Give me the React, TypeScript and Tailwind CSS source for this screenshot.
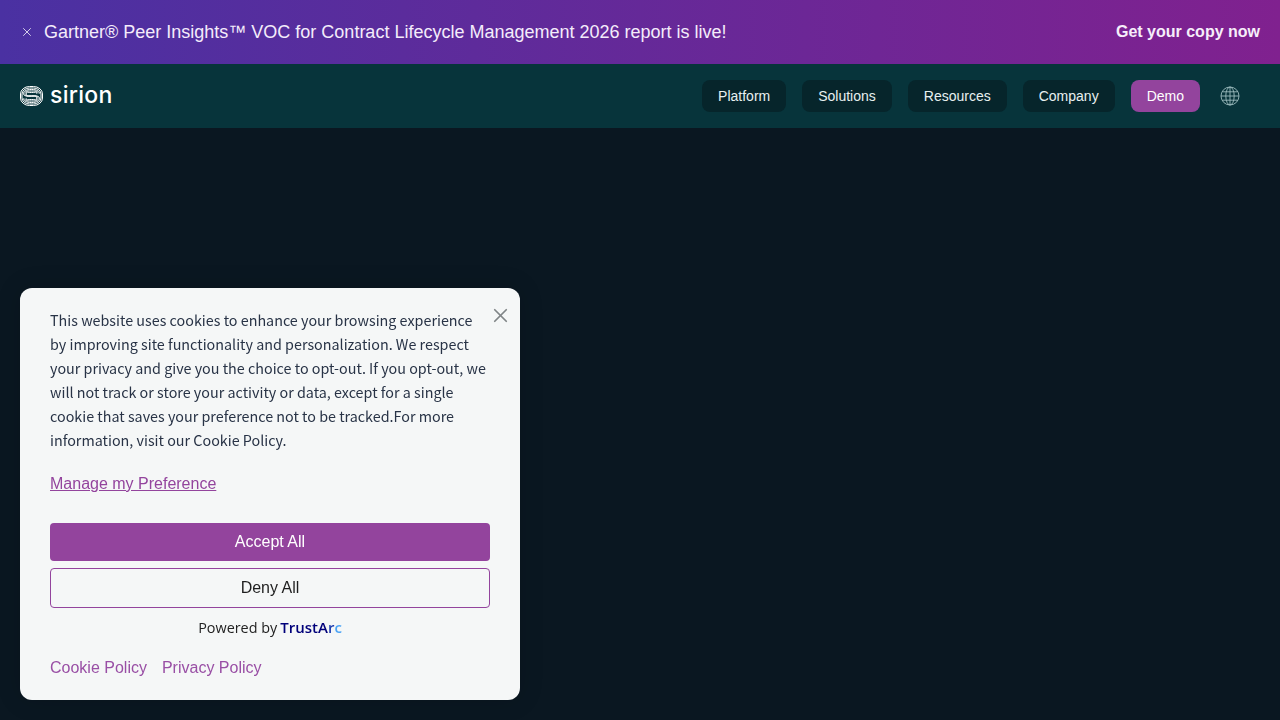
import React from 'react';
import { X } from 'lucide-react';

const navItems = ['Platform', 'Solutions', 'Resources', 'Company'];

// one lobe of the logo, the other one is the same rotated 180deg
function lobePath(d: number) {
  const l = 3.500 + d;
  const r = 19.500 - d;
  const t = 3.500 + d;
  return `M${r} 7.500C${r} 5 17 ${t} 11.500 ${t}C6 ${t} ${l} 5 ${l} 7.500C${l} 10.500 7 10 11.500 10`;
}

function SirionMark() {
  const insets = [0, 1.500, 3];
  return (
    <svg width="23" height="20" viewBox="0 0 23 20" fill="none" stroke="#ffffff" strokeWidth="1">
      <rect x="0.500" y="0.500" width="22" height="19" rx="9" ry="7.500" />
      <rect x="2" y="2" width="19" height="16" rx="7.500" ry="6" />
      {insets.map(d => (
        <path key={d} d={lobePath(d)} />
      ))}
      <g transform="rotate(180 11.500 10)">
        {insets.map(d => (
          <path key={d} d={lobePath(d)} />
        ))}
      </g>
    </svg>
  );
}

function GlobeIcon() {
  return (
    <svg width="20" height="20" viewBox="0 0 20 20" fill="none" stroke="#9dbcbe" strokeWidth="0.9">
      <circle cx="10" cy="10" r="9" />
      <ellipse cx="10" cy="10" rx="4.200" ry="9" />
      <path d="M10 1v18M1 10h18M2.200 5.800h15.600M2.200 14.200h15.600" />
    </svg>
  );
}

function TopBanner() {
  return (
    <div className="h-16 flex items-center justify-between pl-5 pr-5 bg-linear-to-r/srgb from-[#4a31a2] to-[#80218f] text-white">
      <div className="flex items-center">
        <X size={14} strokeWidth={1.300} className="text-white" />
        <span className="ml-[10px] text-[18px] text-[#f4ecfb]">
          Gartner® Peer Insights™ VOC for Contract Lifecycle Management 2026 report is live!
        </span>
      </div>
      <a className="text-base font-bold text-[#f6eefa]">Get your copy now</a>
    </div>
  );
}

function NavBar() {
  return (
    <nav className="h-16 flex items-center justify-between pl-5 pr-10 bg-[#07343b]">
      <div className="flex items-center">
        <SirionMark />
        <span className="ml-[7px] text-[23px] leading-none font-medium text-white font-['Inter',sans-serif] tracking-[0.3px] -mt-[1px]">
          sirion
        </span>
      </div>
      <div className="flex items-center gap-4">
        {navItems.map(item => (
          <button key={item} className="h-8 px-4 rounded-lg bg-[#06252b] text-sm text-[#e8f0f0]">
            {item}
          </button>
        ))}
        <button className="h-8 px-4 rounded-lg bg-[#93449d] text-sm text-white">Demo</button>
        <span className="ml-1 flex"><GlobeIcon /></span>
      </div>
    </nav>
  );
}

function CookieBanner() {
  return (
    <div className="fixed left-5 bottom-5 w-[500px] h-[412px] rounded-xl bg-[#f5f7f7] px-[30px] pt-5 shadow-[0_0_24px_rgba(0,0,0,0.15)]">
      <button className="absolute top-[15px] right-2 w-6 h-6 flex items-center justify-center text-[#808587]">
        <X size={23} strokeWidth={1.800} />
      </button>
      <p className="text-[14.33px] leading-6 text-[#283346] font-['Noto_Sans_CJK_SC','Noto_Sans',sans-serif] whitespace-nowrap">
        This website uses cookies to enhance your browsing experience
        <br />
        by improving site functionality and personalization. We respect
        <br />
        your privacy and give you the choice to opt-out. If you opt-out, we
        <br />
        will not track or store your activity or data, except for a single
        <br />
        cookie that saves your preference not to be tracked.For more
        <br />
        information, visit our Cookie Policy.
      </p>
      <a className="block mt-5 text-base leading-6 text-[#93449d] underline">Manage my Preference</a>
      <button className="block w-full h-[38px] mt-[27px] rounded bg-[#93449d] text-base text-white">Accept All</button>
      <button className="block w-full h-10 mt-[7px] rounded border border-[#93449d] text-base text-[#1f1f1f]">Deny All</button>
      <div className="flex items-baseline justify-center mt-[7px] h-6 leading-6 text-[14.4px] text-[#222222] font-['Open_Sans',sans-serif]">
        <span>Powered by</span>
        <span className="ml-[3px] text-[15px] font-semibold text-[#00007a]">
          TrustA<span className="text-[#1f3fb0]">r</span><span className="text-[#4ba3f5]">c</span>
        </span>
      </div>
      <div className="flex gap-[15px] mt-[17px] text-base leading-6 text-[#994fa5]">
        <a>Cookie Policy</a>
        <a>Privacy Policy</a>
      </div>
    </div>
  );
}

export default function App() {
  return (
    <div className="min-h-screen bg-[#0a1721] font-['Liberation_Sans',Arial,sans-serif]">
      <TopBanner />
      <NavBar />
      <CookieBanner />
    </div>
  );
}
